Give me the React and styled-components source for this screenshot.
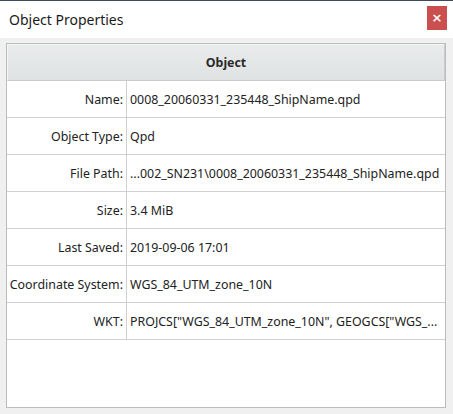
import React from 'react';
import styled, { createGlobalStyle } from 'styled-components';

const GlobalStyle = createGlobalStyle`
  html, body {
    margin: 0;
    padding: 0;
    background: #f0f0f0;
  }
  body {
    font-family: 'Noto Sans', 'Open Sans', sans-serif;
  }
`;

const Window = styled.div`
  width: 453px;
  height: 414px;
  display: flex;
  flex-direction: column;
  background: #f0f0f0;
  border-top: 1px solid #3b4b5b;
  box-sizing: border-box;
`;

const TitleBar = styled.div`
  height: 37px;
  background: #ffffff;
  display: flex;
  align-items: center;
  justify-content: space-between;
  padding: 0 6px 0 9px;
`;

const Title = styled.h1`
  margin: 0;
  font-size: 14px;
  font-weight: 400;
  color: #1a1a1a;
`;

const CloseButton = styled.button`
  width: 20px;
  height: 24px;
  margin-top: -4px;
  border: none;
  padding: 0;
  background: #c9504f;
  color: #fff;
  font-size: 13px;
  font-weight: 700;
  display: flex;
  align-items: center;
  justify-content: center;
  font-family: 'DejaVu Sans', sans-serif;
`;

const Body = styled.div`
  flex: 1;
  padding: 5px 7px 6px 6px;
  display: flex;
`;

const Table = styled.div`
  flex: 1;
  background: #ffffff;
  border: 1px solid #bcbcbc;
  display: flex;
  flex-direction: column;
`;

const Header = styled.div`
  height: 35px;
  border: 1px solid #f4f5f5;
  border-right-color: #c8cbcc;
  border-bottom: 1px solid #c8cbcc;
  background: linear-gradient(#e9ebec, #dfe2e3);
  display: flex;
  align-items: center;
  justify-content: center;
  font-size: 12.4px;
  font-weight: 700;
  color: #2b2b2b;
`;

const Row = styled.div`
  height: 36px;
  display: grid;
  grid-template-columns: 120px 1fr;
  border-bottom: 1px solid #d0d0d0;
  font-size: 12.4px;
  color: #222;
`;

const Cell = styled.div`
  display: flex;
  align-items: center;
  justify-content: ${p => (p.$label ? 'flex-end' : 'flex-start')};
  padding: ${p => (p.$label ? '0 3px 0 0' : '0 0 0 3px')};
  border-right: ${p => (p.$label ? '1px solid #d0d0d0' : 'none')};
  white-space: nowrap;
  overflow: hidden;
`;

const rows = [
  ['Name:', '0008_20060331_235448_ShipName.qpd'],
  ['Object Type:', 'Qpd'],
  ['File Path:', '...002_SN231\\0008_20060331_235448_ShipName.qpd'],
  ['Size:', '3.4 MiB'],
  ['Last Saved:', '2019-09-06 17:01'],
  ['Coordinate System:', 'WGS_84_UTM_zone_10N'],
  ['WKT:', 'PROJCS["WGS_84_UTM_zone_10N", GEOGCS["WGS_...'],
];

export default function App() {
  return (
    <>
      <GlobalStyle />
      <Window>
        <TitleBar>
          <Title>Object Properties</Title>
          <CloseButton>×</CloseButton>
        </TitleBar>
        <Body>
          <Table>
            <Header>Object</Header>
            {rows.map(([label, value]) => (
              <Row key={label}>
                <Cell $label>{label}</Cell>
                <Cell>{value}</Cell>
              </Row>
            ))}
          </Table>
        </Body>
      </Window>
    </>
  );
}
